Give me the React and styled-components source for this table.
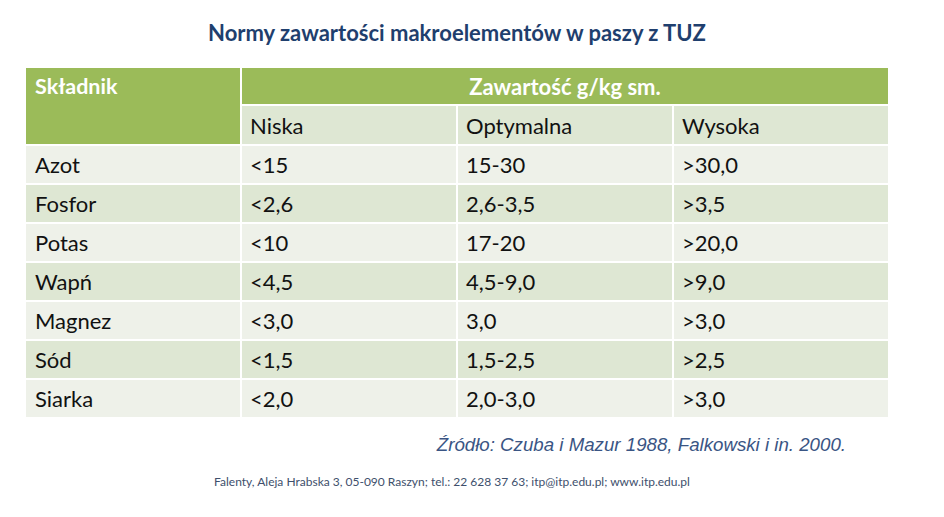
import React from "react";
import styled, { createGlobalStyle } from "styled-components";

const Global = createGlobalStyle`
  html, body { margin: 0; padding: 0; background: #ffffff; }
  body { font-family: "Lato", "Open Sans", sans-serif; }
`;

const Page = styled.div`
  width: 944px;
  height: 517px;
  box-sizing: border-box;
  padding: 0 56px 0 26px;
  display: flex;
  flex-direction: column;
  background: #fff;
`;

const Title = styled.h1`
  margin: 19px 0 0;
  height: 27px;
  font-size: 22px;
  line-height: 27px;
  font-weight: 700;
  color: #1f3f6e;
  text-align: center;
`;

const Table = styled.div`
  margin-top: 22px;
  display: grid;
  grid-template-columns: repeat(4, 214px);
  grid-template-rows: 36px 38px repeat(7, 37px);
  gap: 2px;
  background: #ffffff;
`;

const HeadCell = styled.div`
  background: #9bbb59;
  color: #ffffff;
  font-weight: 700;
  font-size: ${(p) => (p.$center ? "22px" : "21.5px")};
  display: flex;
  align-items: ${(p) => (p.$top ? "flex-start" : "center")};
  justify-content: ${(p) => (p.$center ? "center" : "flex-start")};
  padding: ${(p) => (p.$top ? "5px 0 0 9px" : "0")};
  grid-row: ${(p) => p.$rows || "auto"};
  grid-column: ${(p) => p.$cols || "auto"};
`;

const Cell = styled.div`
  background: ${(p) => (p.$dark ? "#dee7d3" : "#eef1e9")};
  color: #111;
  font-size: 22px;
  display: flex;
  align-items: center;
  padding-left: ${(p) => (p.$first ? "9px" : "8px")};
`;

const Source = styled.div`
  margin-top: 17px;
  padding-right: 42px;
  text-align: right;
  font-family: "Liberation Sans", Arial, sans-serif;
  font-style: italic;
  font-size: 18.7px;
  color: #3a5584;
`;

const Footer = styled.div`
  margin-top: 18px;
  text-align: center;
  font-size: 12px;
  color: #3e4f6c;
  padding-right: 10px;
`;

const rows = [
  ["Azot", "<15", "15-30", ">30,0"],
  ["Fosfor", "<2,6", "2,6-3,5", ">3,5"],
  ["Potas", "<10", "17-20", ">20,0"],
  ["Wapń", "<4,5", "4,5-9,0", ">9,0"],
  ["Magnez", "<3,0", "3,0", ">3,0"],
  ["Sód", "<1,5", "1,5-2,5", ">2,5"],
  ["Siarka", "<2,0", "2,0-3,0", ">3,0"],
];

export default function App() {
  return (
    <>
      <Global />
      <Page>
        <Title>Normy zawartości makroelementów w paszy z TUZ</Title>
        <Table>
          <HeadCell $top $rows="1 / span 2" $cols="1">Składnik</HeadCell>
          <HeadCell $center $cols="2 / span 3">Zawartość g/kg sm.</HeadCell>
          <Cell $dark>Niska</Cell>
          <Cell $dark>Optymalna</Cell>
          <Cell $dark>Wysoka</Cell>
          {rows.map((r, i) =>
            r.map((v, j) => (
              <Cell key={`${i}-${j}`} $dark={i % 2 === 1} $first={j === 0}>
                {v}
              </Cell>
            ))
          )}
        </Table>
        <Source>Źródło: Czuba i Mazur 1988, Falkowski i in. 2000.</Source>
        <Footer>
          Falenty, Aleja Hrabska 3, 05-090 Raszyn; tel.: 22 628 37 63; itp@itp.edu.pl; www.itp.edu.pl
        </Footer>
      </Page>
    </>
  );
}
